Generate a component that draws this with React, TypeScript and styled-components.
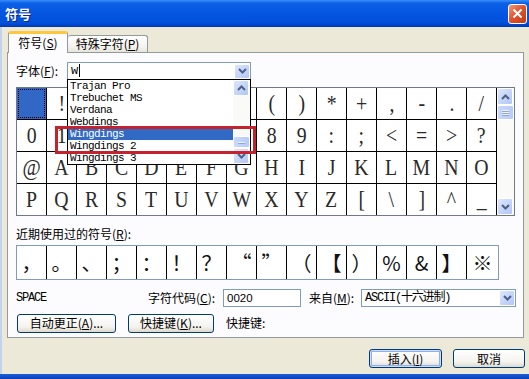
import styled, { createGlobalStyle } from 'styled-components';

const ui = `"Noto Sans CJK SC", "Liberation Sans", sans-serif`;
const mono = `"Liberation Mono", "Noto Sans CJK SC", monospace`;

const GlobalStyle = createGlobalStyle`
  html, body { margin: 0; padding: 0; background: #ECE9D8; }
  body { font-family: ${ui}; font-size: 12px; color: #000; }
  * { box-sizing: border-box; }
`;

const Window = styled.div`
  width: 529px;
  height: 379px;
  display: flex;
  flex-direction: column;
  background: #ECE9D8;
  overflow: hidden;
`;

const TitleBar = styled.div`
  height: 27px;
  flex: none;
  display: flex;
  align-items: center;
  justify-content: space-between;
  padding: 0 2px 0 5px;
  background: linear-gradient(#3A8CF8 0%, #0B61E6 12%, #0454E0 55%, #0250DA 85%, #0038B8 100%);
`;

const Title = styled.span`
  color: #fff;
  font-weight: bold;
  font-size: 13px;
  line-height: 16px;
  text-shadow: 1px 1px 0 #0B2C8A;
`;

const CloseBtn = styled.div`
  width: 19px;
  height: 20px;
  border: 1px solid #fff;
  border-radius: 3px;
  background: linear-gradient(135deg, #F09A7C 0%, #E0552F 45%, #C23A14 100%);
  display: flex;
  align-items: center;
  justify-content: center;
`;

const Frame = styled.div`
  flex: 1;
  display: flex;
  border-left: 2px solid #C2D3F2;
`;

const Body = styled.div`
  flex: 1;
  display: flex;
  flex-direction: column;
  padding: 4px 7px 0 5px;
`;

const BottomEdge = styled.div`
  height: 5px;
  flex: none;
  background: linear-gradient(#1B5FD8, #0A3FB8);
`;

const TabRow = styled.div`
  display: flex;
  align-items: flex-end;
  height: 21px;
  padding-left: 1px;
`;

const Tab = styled.div<{ $active?: boolean }>`
  position: relative;
  display: flex;
  align-items: center;
  justify-content: center;
  line-height: 14px;
  border: 1px solid #919B9C;
  border-bottom: none;
  border-radius: 3px 3px 0 0;
  ${(p) =>
    p.$active
      ? `
    width: 60px;
    height: 22px;
    margin-bottom: -1px;
    z-index: 2;
    border-top: 3px solid #FFC83C;
    background: #FCFCFE;
    padding-bottom: 1px;
  `
      : `
    width: 80px;
    height: 17px;
    border-left: none;
    background: linear-gradient(#FFFFFF, #F3F2EC 70%, #E6E4DA);
  `}
`;

const U = styled.span`
  text-decoration: underline;
`;

const Panel = styled.div`
  height: 286px;
  border: 1px solid #919B9C;
  background: #FCFCFE;
  padding: 9px 7px 0 8px;
  display: flex;
  flex-direction: column;
`;

const Row = styled.div<{ $top?: number }>`
  display: flex;
  align-items: center;
  height: 18px;
  margin-top: ${(p) => p.$top ?? 0}px;
`;

const Label = styled.span<{ $w?: number }>`
  width: ${(p) => (p.$w ? `${p.$w}px` : 'auto')};
  line-height: 14px;
  white-space: nowrap;
  flex: none;
`;

const Combo = styled.div<{ $w: number }>`
  position: relative;
  width: ${(p) => p.$w}px;
  height: 18px;
  border: 1px solid #7F9DB9;
  background: #fff;
  display: flex;
  align-items: center;
  padding-left: 3px;
`;

const ComboText = styled.span<{ $mono?: boolean }>`
  flex: 1;
  font-family: ${(p) => (p.$mono ? mono : `"Liberation Sans", sans-serif`)};
  font-size: ${(p) => (p.$mono ? 12 : 11.5)}px;
  letter-spacing: ${(p) => (p.$mono ? '-1.2px' : '0')};
  line-height: 14px;
  white-space: nowrap;
`;

const Caret = styled.span`
  display: inline-block;
  width: 1px;
  height: 13px;
  background: #000;
  vertical-align: middle;
  margin-left: 2px;
`;

const ArrowBtn = styled.div<{ $h?: number }>`
  width: 16px;
  height: ${(p) => p.$h ?? 16}px;
  flex: none;
  border: 1px solid #fff;
  border-radius: 2px;
  background: linear-gradient(135deg, #DDE8FE 0%, #C4D4FA 55%, #B2C6F4 100%);
  display: flex;
  align-items: center;
  justify-content: center;
`;

const Chevron = ({ dir }: { dir: 'up' | 'down' }) => (
  <svg width="9" height="6" viewBox="0 0 9 6">
    <path
      d={dir === 'up' ? 'M1 5 L4.5 1.5 L8 5' : 'M1 1 L4.5 4.5 L8 1'}
      stroke="#4D6185"
      strokeWidth="2"
      fill="none"
    />
  </svg>
);

const DropList = styled.div`
  position: absolute;
  top: 100%;
  left: -1px;
  width: 184px;
  height: 86px;
  border: 1px solid #000;
  background: #fff;
  z-index: 5;
  display: flex;
`;

const Items = styled.div`
  flex: 1;
  overflow: hidden;
`;

const Item = styled.div<{ $sel?: boolean }>`
  height: 12px;
  line-height: 12px;
  padding-left: 2px;
  font-family: ${mono};
  font-size: 11px;
  letter-spacing: -0.6px;
  white-space: nowrap;
  background: ${(p) => (p.$sel ? '#316AC5' : 'transparent')};
  color: ${(p) => (p.$sel ? '#fff' : '#000')};
`;

const ScrollCol = styled.div`
  width: 17px;
  flex: none;
  display: flex;
  flex-direction: column;
  background: #FAFAF6;
`;

const Thumb = styled.div<{ $h: number }>`
  height: ${(p) => p.$h}px;
  border: 1px solid #fff;
  border-radius: 2px;
  background: linear-gradient(90deg, #C9D8FC, #B8CBF6);
  display: flex;
  flex-direction: column;
  align-items: center;
  justify-content: center;
  gap: 1px;
`;

const Grip = styled.span`
  width: 7px;
  height: 1px;
  background: #EEF4FE;
  box-shadow: 0 1px 0 #8CA6DA;
`;

const Spacer = styled.div`
  flex: 1;
`;

const Highlight = styled.div`
  position: absolute;
  left: -13px;
  top: 46px;
  width: 201px;
  height: 28px;
  border: 3px solid #C4232E;
  z-index: 6;
  pointer-events: none;
`;

const GridBox = styled.div`
  margin-top: 7px;
  align-self: flex-start;
  display: flex;
  border: 1px solid #6E7A8A;
`;

const Grid = styled.div`
  display: grid;
  grid-template-columns: repeat(16, 29px);
  grid-auto-rows: 31px;
  gap: 1px;
  background: #000;
  border-right: 1px solid #000;
`;

const Cell = styled.div<{ $sel?: boolean }>`
  background: ${(p) => (p.$sel ? '#3168C6' : '#fff')};
  outline: ${(p) => (p.$sel ? '1px dotted #000' : 'none')};
  outline-offset: -2px;
  display: flex;
  align-items: center;
  justify-content: center;
  font-family: "Liberation Serif", serif;
  font-size: 23px;
  color: #2a2a2a;
  span {
    display: inline-block;
    transform: scaleX(0.86);
  }
`;

const RecentRow = styled.div`
  margin-top: 2px;
  align-self: flex-start;
  display: grid;
  grid-template-columns: repeat(15, 29px) 31px;
  grid-auto-rows: 33px;
  gap: 1px;
  background: #000;
  border: 1px solid #7F9DB9;
`;

const RecentCell = styled.div`
  background: #fff;
  display: flex;
  align-items: center;
  justify-content: center;
  font-family: "Noto Sans CJK SC", sans-serif;
  font-size: 20px;
  line-height: 1;
  color: #111;
`;

const MonoText = styled.span<{ $w: number }>`
  width: ${(p) => p.$w}px;
  flex: none;
  font-family: ${mono};
  font-size: 12px;
  letter-spacing: -1.2px;
`;

const Button = styled.div<{ $w: number; $default?: boolean }>`
  width: ${(p) => p.$w}px;
  height: 19px;
  flex: none;
  border: 1px solid #003C74;
  border-radius: 3px;
  background: linear-gradient(#FFFFFF, #F4F3EE 70%, #DCD8CC);
  display: flex;
  align-items: center;
  justify-content: center;
  line-height: 14px;
  box-shadow: ${(p) =>
    p.$default ? 'inset 0 0 0 1px #CEDCF7, inset 0 0 0 2px #8FB0EA' : 'none'};
`;

const Footer = styled.div`
  display: flex;
  justify-content: flex-end;
  gap: 11px;
  margin-top: 11px;
  margin-right: -1px;
`;

const row0 = [' ', '!', '"', '#', '$', '%', '&', "'", '(', ')', '*', '+', ',', '-', '.', '/'];
const row1 = '0123456789:;<=>?'.split('');
const row2 = '@ABCDEFGHIJKLMNO'.split('');
const row3 = 'PQRSTUVWXYZ[\\]^_'.split('');
const recent = ['，', '。', '、', '；', '：', '！', '？', '“', '”', '（', '【', '）', '%', '&', '】', '※'];
const fonts = ['Trajan Pro', 'Trebuchet MS', 'Verdana', 'Webdings', 'Wingdings', 'Wingdings 2', 'Wingdings 3'];

const App = () => {
  return (
    <Window>
      <GlobalStyle />
      <TitleBar>
        <Title>符号</Title>
        <CloseBtn>
          <svg width="11" height="11" viewBox="0 0 11 11">
            <path d="M1.5 1.5 L9.5 9.5 M9.5 1.5 L1.5 9.5" stroke="#fff" strokeWidth="2" />
          </svg>
        </CloseBtn>
      </TitleBar>
      <Frame>
        <Body>
          <TabRow>
            <Tab $active>
              符号(<U>S</U>)
            </Tab>
            <Tab>
              特殊字符(<U>P</U>)
            </Tab>
          </TabRow>
          <Panel>
            <Row>
              <Label $w={51}>
                字体(<U>F</U>):
              </Label>
              <Combo $w={184}>
                <ComboText $mono>
                  w<Caret />
                </ComboText>
                <ArrowBtn $h={15}>
                  <Chevron dir="down" />
                </ArrowBtn>
                <DropList>
                  <Items>
                    {fonts.map((f) => (
                      <Item key={f} $sel={f === 'Wingdings'}>
                        {f}
                      </Item>
                    ))}
                  </Items>
                  <ScrollCol>
                    <ArrowBtn>
                      <Chevron dir="up" />
                    </ArrowBtn>
                    <Spacer />
                    <Thumb $h={12}>
                      <Grip />
                    </Thumb>
                    <ArrowBtn>
                      <Chevron dir="down" />
                    </ArrowBtn>
                  </ScrollCol>
                  <Highlight />
                </DropList>
              </Combo>
            </Row>

            <GridBox>
              <Grid>
                {[row0, row1, row2, row3].flat().map((c, i) => (
                  <Cell key={i} $sel={i === 0}>
                    <span>{c}</span>
                  </Cell>
                ))}
              </Grid>
              <ScrollCol>
                <ArrowBtn $h={17}>
                  <Chevron dir="up" />
                </ArrowBtn>
                <Thumb $h={15}>
                  <Grip />
                  <Grip />
                  <Grip />
                </Thumb>
                <Spacer />
                <ArrowBtn $h={17}>
                  <Chevron dir="down" />
                </ArrowBtn>
              </ScrollCol>
            </GridBox>

            <Row $top={9}>
              <Label>
                近期使用过的符号(<U>R</U>):
              </Label>
            </Row>
            <RecentRow>
              {recent.map((c, i) => (
                <RecentCell key={i}>{c}</RecentCell>
              ))}
            </RecentRow>

            <Row $top={9}>
              <MonoText $w={132}>SPACE</MonoText>
              <Label $w={75}>
                字符代码(<U>C</U>):
              </Label>
              <Combo $w={78}>
                <ComboText>0020</ComboText>
              </Combo>
              <Label $w={52} style={{ marginLeft: 8 }}>
                来自(<U>M</U>):
              </Label>
              <Combo $w={155}>
                <ComboText $mono>ASCII(十六进制)</ComboText>
                <ArrowBtn $h={16}>
                  <Chevron dir="down" />
                </ArrowBtn>
              </Combo>
            </Row>

            <Row $top={7}>
              <Button $w={99} style={{ marginLeft: 1 }}>
                自动更正(<U>A</U>)...
              </Button>
              <Button $w={86} style={{ marginLeft: 12 }}>
                快捷键(<U>K</U>)...
              </Button>
              <Label style={{ marginLeft: 12 }}>快捷键:</Label>
            </Row>
          </Panel>

          <Footer>
            <Button $w={73} $default>
              插入(<U>I</U>)
            </Button>
            <Button $w={72}>取消</Button>
          </Footer>
        </Body>
      </Frame>
      <BottomEdge />
    </Window>
  );
};

export default App;
